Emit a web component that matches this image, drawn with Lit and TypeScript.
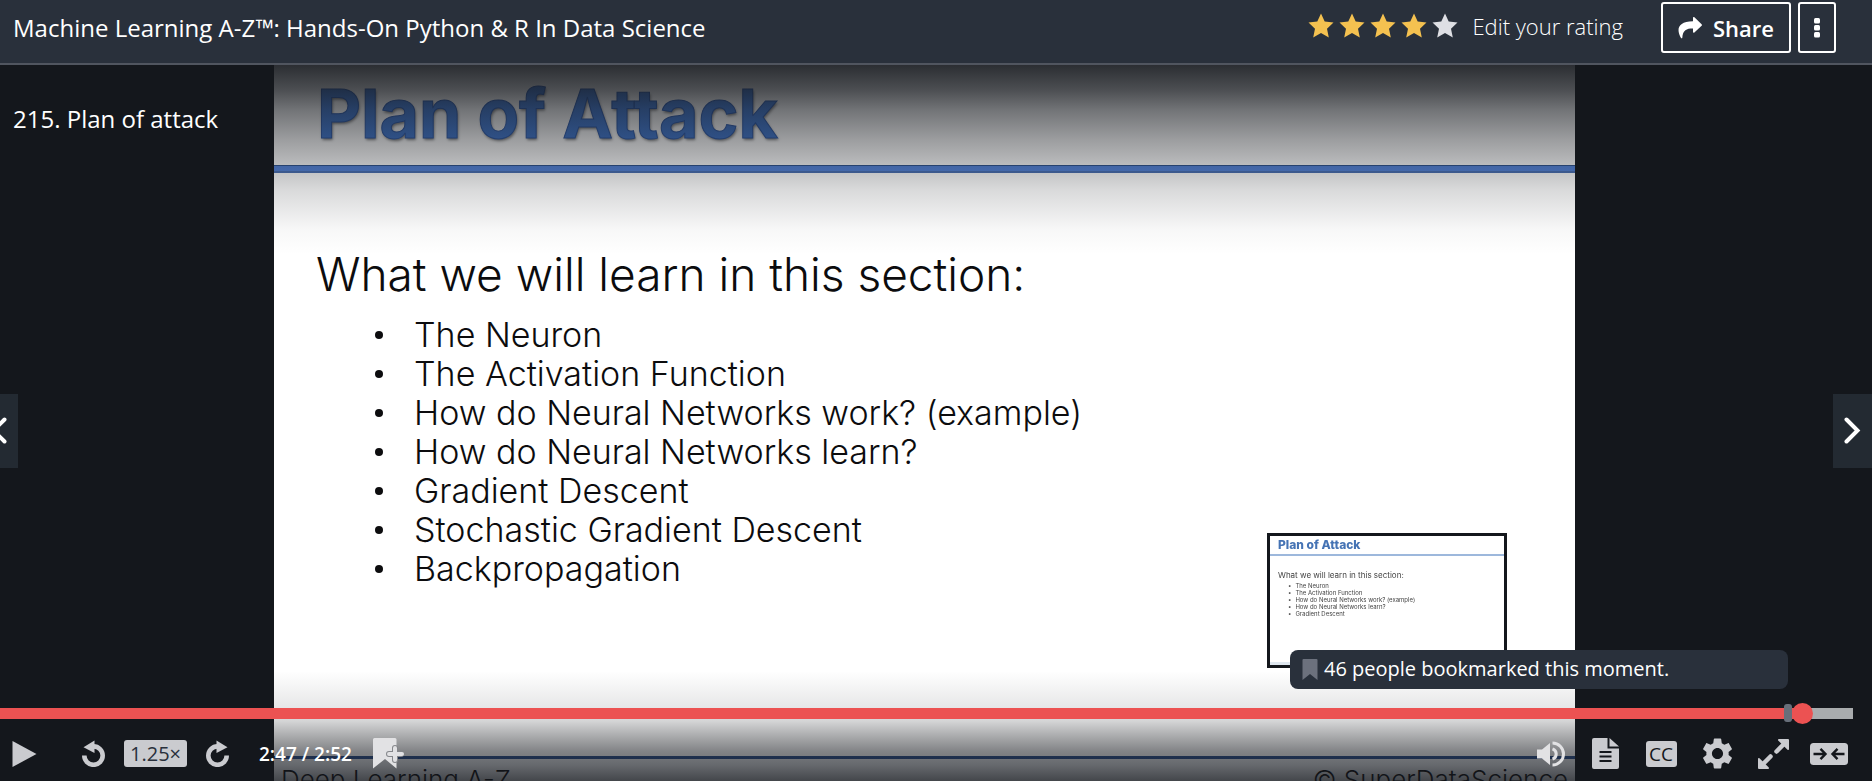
import { LitElement, html, css, svg } from "lit";
import { customElement, property } from "lit/decorators.js";

const TOPICS = [
  "The Neuron",
  "The Activation Function",
  "How do Neural Networks work? (example)",
  "How do Neural Networks learn?",
  "Gradient Descent",
  "Stochastic Gradient Descent",
  "Backpropagation",
];

@customElement("course-header")
class CourseHeader extends LitElement {
  @property({ type: Number }) rating = 4;

  static styles = css`
    :host {
      display: block;
      background: #29303b;
      border-bottom: 2px solid #50555f;
      color: #fff;
    }
    .bar {
      display: flex;
      align-items: center;
      padding: 2px 36px 10px 13px;
    }
    .title {
      flex: 1;
      margin: 0;
      font-size: 24px;
      line-height: 32px;
      font-weight: 400;
    }
    button {
      font: inherit;
      color: inherit;
      background: none;
      border: 0;
      padding: 0;
      display: flex;
      align-items: center;
      justify-content: center;
      cursor: pointer;
    }
    svg {
      display: block;
    }
    .rating {
      gap: 14px;
      margin-right: 38px;
      padding-bottom: 4px;
      font-size: 22px;
      line-height: 32px;
      font-weight: 300;
    }
    .stars {
      display: flex;
      gap: 5px;
    }
    .star {
      fill: #dedfe4;
    }
    .star.on {
      fill: #f4c150;
    }
    .actions {
      display: flex;
      gap: 7px;
    }
    .box {
      height: 51px;
      border: 2px solid #fff;
      border-radius: 3px;
      gap: 11px;
      padding: 0 15px;
      font-size: 22px;
      font-weight: 600;
    }
    .more {
      padding: 0 14px;
    }
  `;

  render() {
    return html`<header class="bar">
      <h1 class="title">Machine Learning A-Z™: Hands-On Python &amp; R In Data Science</h1>
      <button class="rating">
        <span class="stars">
          ${[1, 2, 3, 4, 5].map(
            (n) => html`<svg class="star ${n <= this.rating ? "on" : ""}" width="26" height="26" viewBox="0 0 26 26" aria-hidden="true">
              <path d="M13 .5l3.7 8.1 8.8 1-6.500 6.100 1.800 8.800-7.800-4.400-7.800 4.400 1.800-8.800L.5 9.600l8.800-1z" />
            </svg>`,
          )}
        </span>
        Edit your rating
      </button>
      <div class="actions">
        <button class="box">
          <svg width="24" height="22" viewBox="0 0 24 22" aria-hidden="true">
            <path fill="#fff" d="M15 .8c0-.8.8-1 1.400-.5l7.200 6.900c.5.500.5 1 0 1.500l-7.200 6.900c-.6.500-1.400.3-1.400-.5v-3.700C9 11.300 4.800 12.700 4.300 20.700c0 .8-1 .9-1.300.2C-1.800 12.500-.5 4.700 15 4.300z" />
          </svg>
          Share
        </button>
        <button class="box more" aria-label="More options">
          <svg width="6" height="20" viewBox="0 0 6 20" aria-hidden="true">
            <g fill="#fff"><rect width="6" height="5.500" rx="1.500" /><rect y="7" width="6" height="5.500" rx="1.500" /><rect y="14" width="6" height="5.500" rx="1.500" /></g>
          </svg>
        </button>
      </div>
    </header>`;
  }
}

@customElement("lecture-slide")
class LectureSlide extends LitElement {
  static styles = css`
    :host {
      display: flex;
      flex-direction: column;
      aspect-ratio: 16 / 9;
      background: #fff;
      color: #0c0c0e;
      font-family: Inter, "Open Sans", sans-serif;
      font-weight: 300;
    }
    .title {
      margin: 0;
      padding: 8px 43px 12px;
      font-size: 68px;
      line-height: 80px;
      font-weight: 700;
      color: #437bd4;
      -webkit-text-stroke: 1px #2f5cae;
      text-shadow: 1px 2px 3px rgba(0, 0, 0, 0.5);
    }
    .rule {
      height: 5px;
      background: #5585dc;
      border-top: 1px solid #2f5490;
      border-bottom: 2px solid #4a70b4;
    }
    .lead {
      margin: 0;
      padding: 73px 42px 13px;
      font-size: 46px;
      line-height: 56px;
      font-weight: 300;
    }
    ul {
      list-style: none;
      margin: 0;
      padding: 0 0 0 101px;
    }
    li {
      display: flex;
      align-items: center;
      gap: 31px;
      font-size: 34px;
      line-height: 39px;
    }
    li::before {
      content: "";
      width: 8px;
      height: 8px;
      border-radius: 50%;
      background: #0c0c0e;
    }
    .foot {
      margin-top: auto;
      display: flex;
      justify-content: space-between;
      border-top: 3px solid #2c4f8c;
      background: #eceef2;
      padding: 5px 7px 1px;
      font-size: 26px;
      line-height: 32px;
    }
  `;

  render() {
    return html`<h2 class="title">Plan of Attack</h2>
      <div class="rule"></div>
      <p class="lead">What we will learn in this section:</p>
      <ul>
        ${TOPICS.map((t) => html`<li>${t}</li>`)}
      </ul>
      <div class="foot"><span>Deep Learning A-Z</span><span>© SuperDataScience</span></div>`;
  }
}

@customElement("moment-preview")
class MomentPreview extends LitElement {
  static styles = css`
    :host {
      display: block;
    }
    .thumb {
      position: absolute;
      right: 365px;
      bottom: 113px;
      box-sizing: border-box;
      width: 240px;
      height: 135px;
      border: 3px solid #14171c;
      background: #fff;
      overflow: hidden;
    }
    .mini {
      display: flex;
      flex-direction: column;
      height: 100%;
      color: #444;
      font-family: Inter, "Open Sans", sans-serif;
      filter: blur(0.5px);
    }
    .title {
      margin: 0;
      padding: 1px 8px;
      font-size: 12px;
      line-height: 16px;
      font-weight: 800;
      color: #4573b4;
      border-bottom: 2px solid #9db8dc;
    }
    .lead {
      margin: 0;
      padding: 14px 8px 2px;
      font-size: 8px;
      line-height: 10px;
    }
    ul {
      margin: 0;
      padding: 0 0 0 18px;
      list-style: none;
      font-size: 6px;
      line-height: 7px;
    }
    li {
      display: flex;
      gap: 4px;
    }
    li::before {
      content: "•";
    }
    .foot {
      margin-top: auto;
      height: 3px;
      background: #dfe7ef;
    }
    .tip {
      position: absolute;
      right: 84px;
      bottom: 92px;
      box-sizing: border-box;
      width: 498px;
      display: flex;
      align-items: center;
      gap: 6px;
      padding: 5px 12px 6px;
      border-radius: 8px;
      background: #29303b;
      color: #fff;
      font-size: 20px;
      line-height: 28px;
    }
  `;

  render() {
    return html`<div class="thumb" aria-hidden="true">
        <div class="mini">
          <p class="title">Plan of Attack</p>
          <p class="lead">What we will learn in this section:</p>
          <ul>
            ${TOPICS.slice(0, 5).map((t) => html`<li>${t}</li>`)}
          </ul>
          <div class="foot"></div>
        </div>
      </div>
      <div class="tip" role="tooltip">
        <svg width="16" height="21" viewBox="0 0 16 21" aria-hidden="true"><path fill="#6c717d" d="M1.500 0h13q1 0 1 1v20L8 15 .5 21V1q0-1 1-1z" /></svg>
        46 people bookmarked this moment.
      </div>`;
  }
}

const rewindShape = svg`<path d="M11.500 6.400a9.200 9.200 0 1 1-9.200 9.200" fill="none" stroke="#cacbcf" stroke-width="4.600" /><path d="M1.500 7.200 12.500.5v12.500z" fill="#cacbcf" />`;

@customElement("player-controls")
class PlayerControls extends LitElement {
  static styles = css`
    :host {
      display: block;
      position: absolute;
      left: 0;
      right: 0;
      bottom: 0;
      color: #fff;
      font-size: 19px;
    }
    .track {
      position: relative;
      margin-right: 19px;
      height: 21px;
    }
    .seek {
      appearance: none;
      display: block;
      width: 100%;
      height: 21px;
      margin: 0;
      background: linear-gradient(to right, #ec5252 97%, #a9acae 97%) center / 100% 11px no-repeat;
      cursor: pointer;
    }
    .seek::-webkit-slider-thumb {
      appearance: none;
      width: 21px;
      height: 21px;
      border-radius: 50%;
      background: #ec5252;
    }
    .mark {
      position: absolute;
      top: 1px;
      left: 96.300%;
      width: 8px;
      height: 18px;
      border-radius: 3px;
      background: #686f7a;
    }
    .row {
      display: flex;
      align-items: center;
      height: 31px;
      padding: 14px 15px 12px 12px;
    }
    button {
      font: inherit;
      color: inherit;
      background: none;
      border: 0;
      padding: 0;
      display: flex;
      align-items: center;
      justify-content: center;
      cursor: pointer;
    }
    svg {
      display: block;
    }
    .skip {
      display: flex;
      align-items: center;
      gap: 18px;
      margin: 0 30px 0 45px;
    }
    .speed {
      width: 63px;
      height: 27px;
      border-radius: 3px;
      background: #cacbcf;
      color: #29303b;
      font-size: 20px;
      line-height: 27px;
    }
    .time {
      font-weight: 600;
      margin-right: 21px;
    }
    .right {
      display: flex;
      margin-left: auto;
    }
    .right button {
      width: 56px;
      height: 31px;
    }
    .cc {
      width: 31px;
      height: 26px;
      border-radius: 3px;
      background: #cacbcf;
      color: #14171c;
      font-size: 19px;
      line-height: 26px;
      text-align: center;
    }
  `;

  render() {
    return html`<div class="track">
        <input class="seek" type="range" min="0" max="1000" .value=${"978"} aria-label="Seek" />
        <span class="mark"></span>
      </div>
      <div class="row">
        <button aria-label="Play">
          <svg width="25" height="26" viewBox="0 0 25 26"><path fill="#cacbcf" d="M.5 0 24.500 13 .5 26z" /></svg>
        </button>
        <div class="skip">
          <button aria-label="Rewind"><svg width="24" height="27" viewBox="0 0 24 27">${rewindShape}</svg></button>
          <button class="speed" aria-label="Playback rate">1.25×</button>
          <button aria-label="Forward"><svg width="24" height="27" viewBox="0 0 24 27"><g transform="matrix(-1 0 0 1 24 0)">${rewindShape}</g></svg></button>
        </div>
        <span class="time">2:47 / 2:52</span>
        <button aria-label="Add bookmark">
          <svg width="32" height="31" viewBox="0 0 32 31">
            <path fill="#e2e2e4" d="M1.500 0H22q1.500 0 1.500 1.500V30.500L12 21 0 30.500V1.500Q0 0 1.500 0z" />
            <path d="M22 10v12M16 16h12" fill="none" stroke="#85878b" stroke-width="6" stroke-linecap="round" />
            <path d="M22 10v12M16 16h13" fill="none" stroke="#e2e2e4" stroke-width="4" stroke-linecap="round" />
          </svg>
        </button>
        <div class="right">
          <button aria-label="Volume">
            <svg width="32" height="26" viewBox="-4 0 32 26">
              <path fill="#e2e2e4" d="M0 8.500h5L13 2v22L5 17.500H0z" />
              <path fill="none" stroke="#e2e2e4" stroke-width="3" d="M15.500 7.800a5.500 5.500 0 0 1 0 10.400M15.500 2a11 11 0 0 1 0 22" />
            </svg>
          </button>
          <button aria-label="Transcript">
            <svg width="27" height="31" viewBox="0 0 27 31">
              <path fill="#cacbcf" d="M2 0h13.500v10.500H27V29q0 2-2 2H2q-2 0-2-2V2Q0 0 2 0zM17.500 0 27 8.500h-9.500z" />
              <path stroke="#14171c" stroke-width="2" d="M7.500 14h12M7.500 18.500h12M7.500 23h12" />
            </svg>
          </button>
          <button aria-label="Captions"><span class="cc">CC</span></button>
          <button aria-label="Settings">
            <svg width="31" height="31" viewBox="2 2 20 20">
              <path fill="#cacbcf" d="M19.140 12.940c.04-.3.06-.61.06-.94 0-.32-.02-.64-.07-.94l2.030-1.580c.18-.14.23-.41.12-.61l-1.920-3.320c-.12-.22-.37-.29-.59-.22l-2.390.96c-.5-.38-1.030-.7-1.620-.94l-.36-2.540c-.04-.24-.24-.41-.48-.41h-3.840c-.24 0-.43.17-.47.41l-.36 2.540c-.59.24-1.130.57-1.620.94l-2.390-.96c-.22-.08-.47 0-.59.22L2.740 8.870c-.12.21-.08.47.12.61l2.030 1.580c-.05.3-.09.63-.09.94s.02.64.07.94l-2.030 1.580c-.18.14-.23.41-.12.61l1.920 3.320c.12.22.37.29.59.22l2.390-.96c.5.38 1.030.7 1.620.94l.36 2.540c.05.24.24.41.48.41h3.840c.24 0 .44-.17.47-.41l.36-2.540c.59-.24 1.130-.56 1.620-.94l2.390.96c.22.08.47 0 .59-.22l1.920-3.320c.12-.22.07-.47-.12-.61l-2.010-1.580zM12 15.600c-1.980 0-3.600-1.620-3.600-3.600s1.620-3.600 3.600-3.600 3.600 1.620 3.600 3.600-1.620 3.600-3.600 3.600z" />
            </svg>
          </button>
          <button aria-label="Fullscreen">
            <svg width="31" height="30" viewBox="0 0 31 30">
              <g fill="#cacbcf">
                <path d="M21 0h9q1 0 1 1v9q0 1.500-1.500.8L20.200 1.500Q19.500 0 21 0z" />
                <path d="M10 30H1q-1 0-1-1v-9q0-1.500 1.500-.8l9.300 9.300q.7 1.500-.8 1.500z" />
              </g>
              <path stroke="#cacbcf" stroke-width="4.500" stroke-linecap="round" d="M26.500 4.500l-8 8M4.500 25.500l8-8" />
            </svg>
          </button>
          <button aria-label="Exit expanded view">
            <svg width="38" height="22" viewBox="0 0 38 22">
              <rect width="38" height="22" rx="3.500" fill="#cacbcf" />
              <path fill="none" stroke="#14171c" stroke-width="2.400" d="M3.500 11h11.500M10.500 5.800l5 5.200-5 5.200M34.500 11H23M27.500 5.800l-5 5.200 5 5.200" />
            </svg>
          </button>
        </div>
      </div>`;
  }
}

@customElement("app-root")
class AppRoot extends LitElement {
  static styles = css`
    :host {
      display: flex;
      flex-direction: column;
      box-sizing: border-box;
      height: 100vh;
      border-right: 1px solid #fff;
      background: #14171c;
      font-family: "Open Sans", "Noto Sans", sans-serif;
    }
    .player {
      position: relative;
      flex: 1;
      min-height: 0;
      overflow: hidden;
      color: #fff;
    }
    .stage {
      display: grid;
      grid-template-columns: 274fr 1301fr 297fr;
    }
    .side {
      display: grid;
      min-width: 0;
      position: relative;
      z-index: 1;
    }
    .side > * {
      grid-area: 1 / 1;
    }
    .lecture {
      margin: 0;
      padding: 38px 0 0 13px;
      font-size: 24px;
      line-height: 32px;
      font-weight: 400;
    }
    .nav {
      display: flex;
      align-items: center;
      justify-content: center;
      align-self: center;
      width: 39px;
      height: 74px;
      border: 0;
      padding: 0;
      background: #232a32;
      cursor: pointer;
    }
    .prev {
      margin-left: -21px;
    }
    .next {
      justify-self: end;
    }
    .shade {
      position: absolute;
      left: 0;
      right: 0;
      pointer-events: none;
    }
    .top {
      top: 0;
      height: 190px;
      background: linear-gradient(
        rgba(20, 23, 28, 0.9),
        rgba(20, 23, 28, 0.76) 25px,
        rgba(20, 23, 28, 0.6) 45px,
        rgba(20, 23, 28, 0.42) 75px,
        rgba(20, 23, 28, 0.29) 100px,
        rgba(20, 23, 28, 0.16) 125px,
        rgba(20, 23, 28, 0.03) 165px,
        rgba(20, 23, 28, 0)
      );
    }
    .bottom {
      bottom: 0;
      height: 110px;
      background: linear-gradient(
        rgba(20, 23, 28, 0),
        rgba(20, 23, 28, 0.1) 36px,
        rgba(20, 23, 28, 0.18) 50px,
        rgba(20, 23, 28, 0.35) 64px,
        rgba(20, 23, 28, 0.53) 80px,
        rgba(20, 23, 28, 0.62) 94px,
        rgba(20, 23, 28, 0.78)
      );
    }
    player-controls {
      z-index: 2;
    }
  `;

  render() {
    return html`<course-header></course-header>
      <main class="player">
        <div class="stage">
          <div class="side">
            <p class="lecture">215. Plan of attack</p>
            <button class="nav prev" aria-label="Previous lecture">
              <svg width="17" height="27" viewBox="0 0 17 27"><path d="M14.500 2.500l-11 11 11 11" fill="none" stroke="#fff" stroke-width="4" stroke-linecap="round" /></svg>
            </button>
          </div>
          <lecture-slide></lecture-slide>
          <div class="side">
            <button class="nav next" aria-label="Next lecture">
              <svg width="17" height="27" viewBox="0 0 17 27"><path d="M2.500 2.500l11 11-11 11" fill="none" stroke="#fff" stroke-width="4" stroke-linecap="round" /></svg>
            </button>
          </div>
        </div>
        <div class="shade top"></div>
        <div class="shade bottom"></div>
        <moment-preview></moment-preview>
        <player-controls></player-controls>
      </main>`;
  }
}
